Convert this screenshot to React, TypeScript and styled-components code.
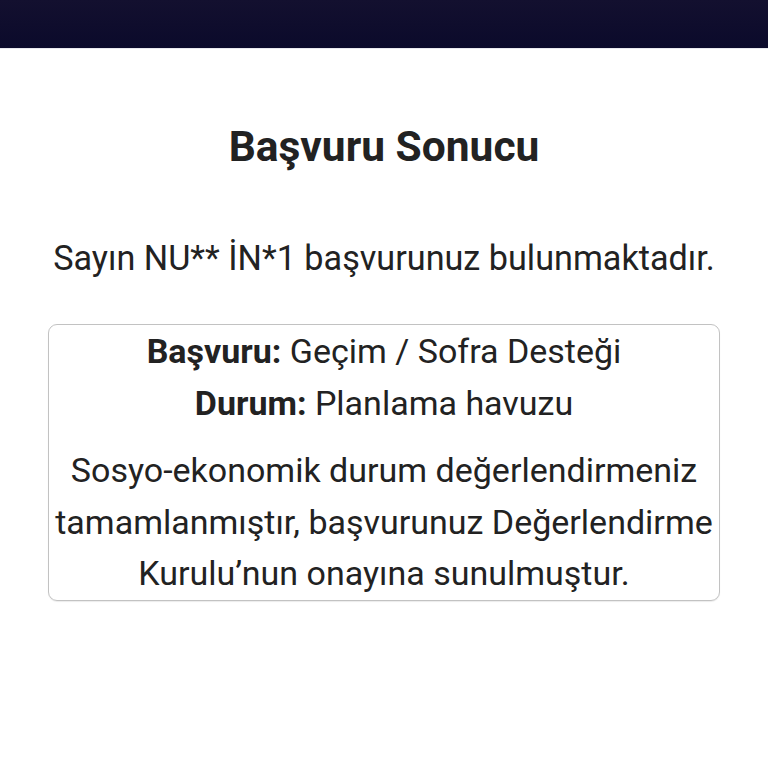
import React from "react";
import styled, { createGlobalStyle } from "styled-components";

const Global = createGlobalStyle`
  html, body { margin: 0; padding: 0; background: #ffffff; }
  body { font-family: Roboto, "Noto Sans", Arial, sans-serif; color: #222222; }
`;

const Page = styled.div`
  display: flex;
  flex-direction: column;
  min-height: 768px;
`;

const TopBar = styled.header`
  height: 48px;
  background: linear-gradient(180deg, #13102f 0%, #0b0a2b 100%);
  display: flex;
  align-items: flex-start;
  border-bottom: 1px solid #e8e8ee;
`;

const Content = styled.main`
  display: flex;
  flex-direction: column;
  align-items: center;
  padding: 74px 48px 0;
`;

const Title = styled.h1`
  margin: 0;
  font-size: 42.5px;
  line-height: 48px;
  font-weight: 700;
  color: #222222;
`;

const Lead = styled.p`
  margin: 67px 0 0;
  font-size: 34.2px;
  line-height: 40px;
  font-weight: 400;
  color: #222222;
  text-align: center;
  white-space: nowrap;
`;

const ResultBox = styled.section`
  margin-top: 46px;
  width: 100%;
  box-sizing: border-box;
  border: 1.5px solid #c2c2c2;
  border-radius: 9px;
  box-shadow: 0 1px 1px rgba(0, 0, 0, 0.08);
  text-align: center;
  font-size: 34px;
  line-height: 52px;
  color: #222222;
`;

const Row = styled.div`
  margin: 0;
`;

const Label = styled.strong`
  font-weight: 700;
`;

const Note = styled.p`
  margin: 16px 0 0;
  line-height: 51.5px;
  white-space: nowrap;
`;

export default function App() {
  return (
    <>
      <Global />
      <Page>
        <TopBar />
        <Content>
          <Title>Başvuru Sonucu</Title>
          <Lead>Sayın NU** İN*1 başvurunuz bulunmaktadır.</Lead>
          <ResultBox>
            <Row>
              <Label>Başvuru:</Label> Geçim / Sofra Desteği
            </Row>
            <Row>
              <Label>Durum:</Label> Planlama havuzu
            </Row>
            <Note>
              Sosyo-ekonomik durum değerlendirmeniz
              <br />
              tamamlanmıştır, başvurunuz Değerlendirme
              <br />
              Kurulu’nun onayına sunulmuştur.
            </Note>
          </ResultBox>
        </Content>
      </Page>
    </>
  );
}
